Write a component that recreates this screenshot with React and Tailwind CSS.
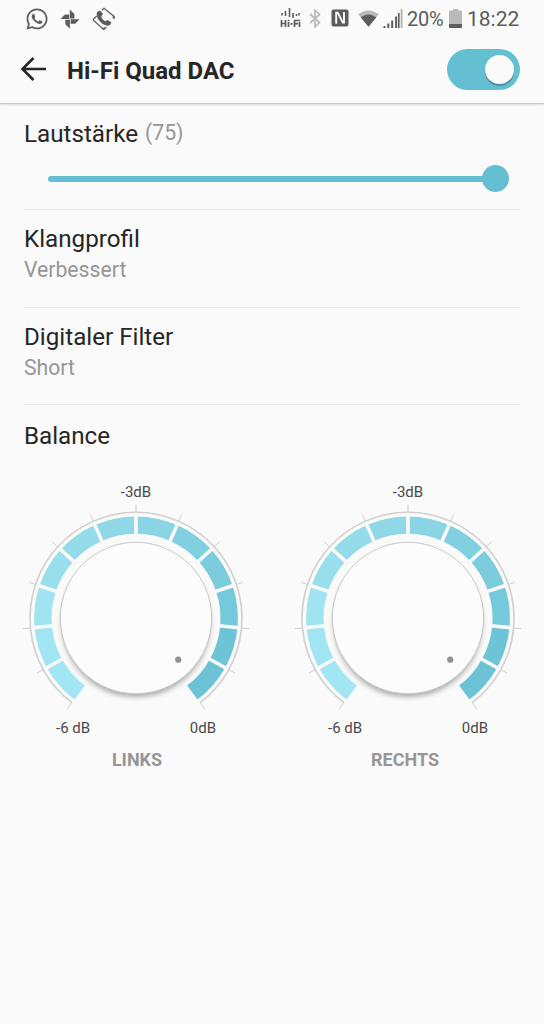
import { FaWhatsapp } from 'react-icons/fa'

const STEP = 23.8
const CX = 136
const CY = 118.3

const SEGMENTS = [
  '#a1e6f2',
  '#a0e5f1',
  '#9fe4f0',
  '#98dfec',
  '#95dcea',
  '#90d8e7',
  '#8ad5e4',
  '#80d0e0',
  '#7bcddd',
  '#74c9da',
  '#6dc4d6',
  '#6bc3d5',
]

function polar(r, deg) {
  const a = (deg * Math.PI) / 180
  return [CX + r * Math.sin(a), CY - r * Math.cos(a)]
}

function arc(r, from, to) {
  const [x1, y1] = polar(r, from)
  const [x2, y2] = polar(r, to)
  const large = to - from > 180 ? 1 : 0
  return `M${x1} ${y1}A${r} ${r} 0 ${large} 1 ${x2} ${y2}`
}

function Spoke({ deg, r1, r2, ...props }) {
  const [x1, y1] = polar(r1, deg)
  const [x2, y2] = polar(r2, deg)
  return <line x1={x1} y1={y1} x2={x2} y2={y2} {...props} />
}

function PinwheelIcon() {
  return (
    <svg width="20" height="20" viewBox="0 0 20 20" fill="#5c5c5c">
      <path d="M9.800.4l4.600 4.500v4.500H9.800z" />
      <path d="M19.600 10.200 15.100 14.800h-4.500v-4.600z" />
      <path d="M9.900 19.800 5.300 15.200v-4.400h4.600z" />
      <path d="M.4 10 5 5.400h4.200V10z" />
    </svg>
  )
}

function CallRotateIcon() {
  return (
    <svg width="24" height="24" viewBox="0 0 24 24" fill="none">
      <path d="M9.8 3.2 12 1.3l10.2 8.2-1.2 1.8M14.6 20.2l-3.2 2L1.6 13.4 1.5 12l3.2-2.8" stroke="#5c5c5c" strokeWidth="1.3" />
      <path d="m20.2 9.6 3 .2-1 2.7zM12.5 19.8l.4 3-2.8-.6z" fill="#5c5c5c" />
      <path d="M5.6 4.8 8 3.4l3 3.5-1.8 2.3c.6 2.2 2 4 4 5l2.5-1.2 3.8 2.6-1.4 2.2c-1 1.2-3 1.1-5.2.2-4.6-2-7.5-5.7-8.2-10-.1-1.5.2-2.5.9-3.2z" fill="#5c5c5c" />
    </svg>
  )
}

function HiFiIcon() {
  return (
    <svg width="21" height="20" viewBox="0 0 21 20" stroke="#5c5c5c" fill="none">
      <path d="M2 5v2.500M5.500 3v5M9.500 0v9M13 5v5M16.500 6v2M19 5v2.500" strokeWidth="1.600" />
      <path d="M1.500 12v7M5.500 12v7M1.500 15.500h4M8.500 14v5M8.500 11.800v1.400M10.500 15.800h2M14.500 19v-7M14 12.500h4.500M14.500 15.700h3.500M19.500 14v5M19.500 11.800v1.400" strokeWidth="1.700" />
    </svg>
  )
}

function BluetoothIcon() {
  return (
    <svg width="12" height="19" viewBox="0 0 12 19" fill="none" stroke="#b9b9b9" strokeWidth="1.700">
      <path d="m1 5 9.500 8.600L6 17.800V1.200l4.500 4.200L1 14" />
    </svg>
  )
}

function NfcIcon() {
  return (
    <svg width="18" height="18" viewBox="0 0 18 18">
      <rect x=".5" y=".5" width="17" height="17" rx="2" fill="#5c5c5c" />
      <path d="M5.200 14.800V3.800h1.600l5 9.800h1.200V3" fill="none" stroke="#fafafa" strokeWidth="1.900" />
    </svg>
  )
}

function WifiIcon() {
  return (
    <svg width="21" height="17" viewBox="0 0 21 17">
      <path d="M.3 4.300Q10.500-3.300 20.700 4.300L10.500 16.800z" fill="#b9b9b9" />
      <path d="M2.700 7.300Q10.500 1.500 18.300 7.300L10.500 16.800z" fill="#5c5c5c" />
    </svg>
  )
}

function SignalIcon() {
  return (
    <svg width="20" height="19" viewBox="0 0 20 19" fill="#5c5c5c">
      <path d="M.5 17h2v2h-2zM4.300 14.500h2V19h-2zM8.200 11.500h2V19h-2zM12.100 7.500h2V19h-2zM15 4h1.600v15H15z" />
      <path d="M17.600 0h2v19h-2z" fill="#b9b9b9" />
    </svg>
  )
}

function BatteryIcon() {
  return (
    <svg width="13" height="19" viewBox="0 0 13 19">
      <path d="M4 0h5v1.500h3a1 1 0 0 1 1 1V15H0V2.500a1 1 0 0 1 1-1h3z" fill="#b9b9b9" />
      <path d="M0 15h13v3a1 1 0 0 1-1 1H1a1 1 0 0 1-1-1z" fill="#5c5c5c" />
    </svg>
  )
}

function StatusBar() {
  return (
    <div className="h-[37px] pl-[25px] pr-[26px] flex items-center justify-between text-[#5c5c5c]">
      <div className="flex items-center">
        <FaWhatsapp size={24} />
        <div className="ml-[11px]"><PinwheelIcon /></div>
        <div className="ml-[12px]"><CallRotateIcon /></div>
      </div>
      <div className="flex items-center">
        <div className="-mt-px"><HiFiIcon /></div>
        <div className="ml-[8px] -mt-px"><BluetoothIcon /></div>
        <div className="ml-[10px] -mt-px"><NfcIcon /></div>
        <div className="ml-[9px]"><WifiIcon /></div>
        <div className="ml-[4px]"><SignalIcon /></div>
        <span className="ml-[4px] mt-px w-[37px] text-[20px] leading-none whitespace-nowrap tracking-[-0.200px]">20%</span>
        <div className="ml-[5px]"><BatteryIcon /></div>
        <span className="ml-[5px] mt-[2px] w-[51px] text-[21px] leading-none whitespace-nowrap">18:22</span>
      </div>
    </div>
  )
}

function Header() {
  return (
    <header className="h-[67px] pb-px pl-[20px] pr-6 flex items-center border-b border-[#cccccc] shadow-[0_1px_2px_rgba(0,0,0,0.12)]">
      <svg className="-mt-[2px]" width="26" height="24" viewBox="0 0 26 24" fill="none" stroke="#262626" strokeWidth="2.600">
        <path d="M26 12H2.500M13.500 1 2.500 12l11 11" />
      </svg>
      <h1 className="ml-[21px] mt-[3px] text-[24px] leading-7 font-bold text-[#262626]">Hi-Fi Quad DAC</h1>
      <button className="ml-auto w-[73px] h-[41px] rounded-full bg-[#64bfd2] flex items-center justify-end pr-[6px]">
        <span className="size-[29px] rounded-full bg-[#fafafa] shadow-[0_2px_1px_rgba(0,0,0,0.25)]" />
      </button>
    </header>
  )
}

function Setting({ title, value }) {
  return (
    <div className="h-[97.500px] pt-[14px] border-b border-[#e6e6e6]">
      <div className="text-[24.200px] leading-[31px] text-[#262626]">{title}</div>
      <div className="text-[21.200px] leading-[30px] text-[#969696]">{value}</div>
    </div>
  )
}

function Dial({ id, label, labelShift }) {
  const ticks = Array.from({ length: 13 }, (_, i) => (i - 6) * STEP)
  return (
    <div className="text-[15px] leading-[18px] text-[#4a4a4a]">
      <div className="text-center">-3dB</div>
      <svg className="block -mt-px" width="272" height="219" viewBox="0 0 272 219" fill="none">
        <defs>
          <filter id={`${id}-blur`} x="-20%" y="-20%" width="140%" height="140%">
            <feGaussianBlur stdDeviation="2.500" />
          </filter>
        </defs>
        <path d={arc(106, -6 * STEP, 6 * STEP)} stroke="#d0d0d0" strokeWidth="1.600" />
        {ticks.map((deg) => (
          <Spoke key={deg} deg={deg} r1={106} r2={113.5} stroke="#d0d0d0" strokeWidth="1" />
        ))}
        {SEGMENTS.map((color, i) => (
          <path key={i} d={arc(93.2, ticks[i], ticks[i + 1])} stroke={color} strokeWidth="17.400" />
        ))}
        {ticks.slice(1, -1).map((deg) => (
          <Spoke key={deg} deg={deg} r1={83} r2={103.5} stroke="#fafafa" strokeWidth="3.600" />
        ))}
        <circle cx={CX} cy={CY + 4.5} r="74.500" fill="#000" fillOpacity=".3" filter={`url(#${id}-blur)`} />
        <circle cx={CX} cy={CY - 0.3} r="75.700" fill="#fcfcfc" stroke="#c8c8c8" strokeWidth="1" />
        <circle cx="178.200" cy="159.700" r="3.100" fill="#929292" />
      </svg>
      <div className="flex justify-between pl-[56px] pr-[56px]">
        <span>-6 dB</span>
        <span>0dB</span>
      </div>
      <div className={`mt-[12px] text-center text-[18px] leading-[22px] font-bold text-[#969696] ${labelShift}`}>{label}</div>
    </div>
  )
}

export default function App() {
  return (
    <div className="w-[544px] h-[1024px] overflow-hidden bg-[#fafafa] font-['Roboto',sans-serif]">
      <StatusBar />
      <Header />
      <main>
        <div className="px-6">
          <section className="h-[106px] pt-[15px] border-b border-[#e6e6e6]">
            <div className="flex items-center leading-[30px]">
              <span className="text-[24.200px] text-[#262626]">Lautstärke</span>
              <span className="ml-[7px] -mt-[3px] text-[21.200px] text-[#969696]">(75)</span>
            </div>
            <div className="mt-[16px] ml-6 mr-[11px] h-[27px] flex items-center">
              <div className="h-[6px] flex-1 rounded-l-full bg-[#64bfd2]" />
              <div className="-ml-px size-[27px] rounded-full bg-[#64bfd2]" />
            </div>
          </section>
          <Setting title="Klangprofil" value="Verbessert" />
          <Setting title="Digitaler Filter" value="Short" />
          <h2 className="pt-[16px] text-[24.200px] leading-[30px] text-[#262626]">Balance</h2>
        </div>
        <div className="mt-[32px] grid grid-cols-2">
          <Dial id="left" label="LINKS" labelShift="pl-[2px]" />
          <Dial id="right" label="RECHTS" labelShift="pr-[6px]" />
        </div>
      </main>
    </div>
  )
}
